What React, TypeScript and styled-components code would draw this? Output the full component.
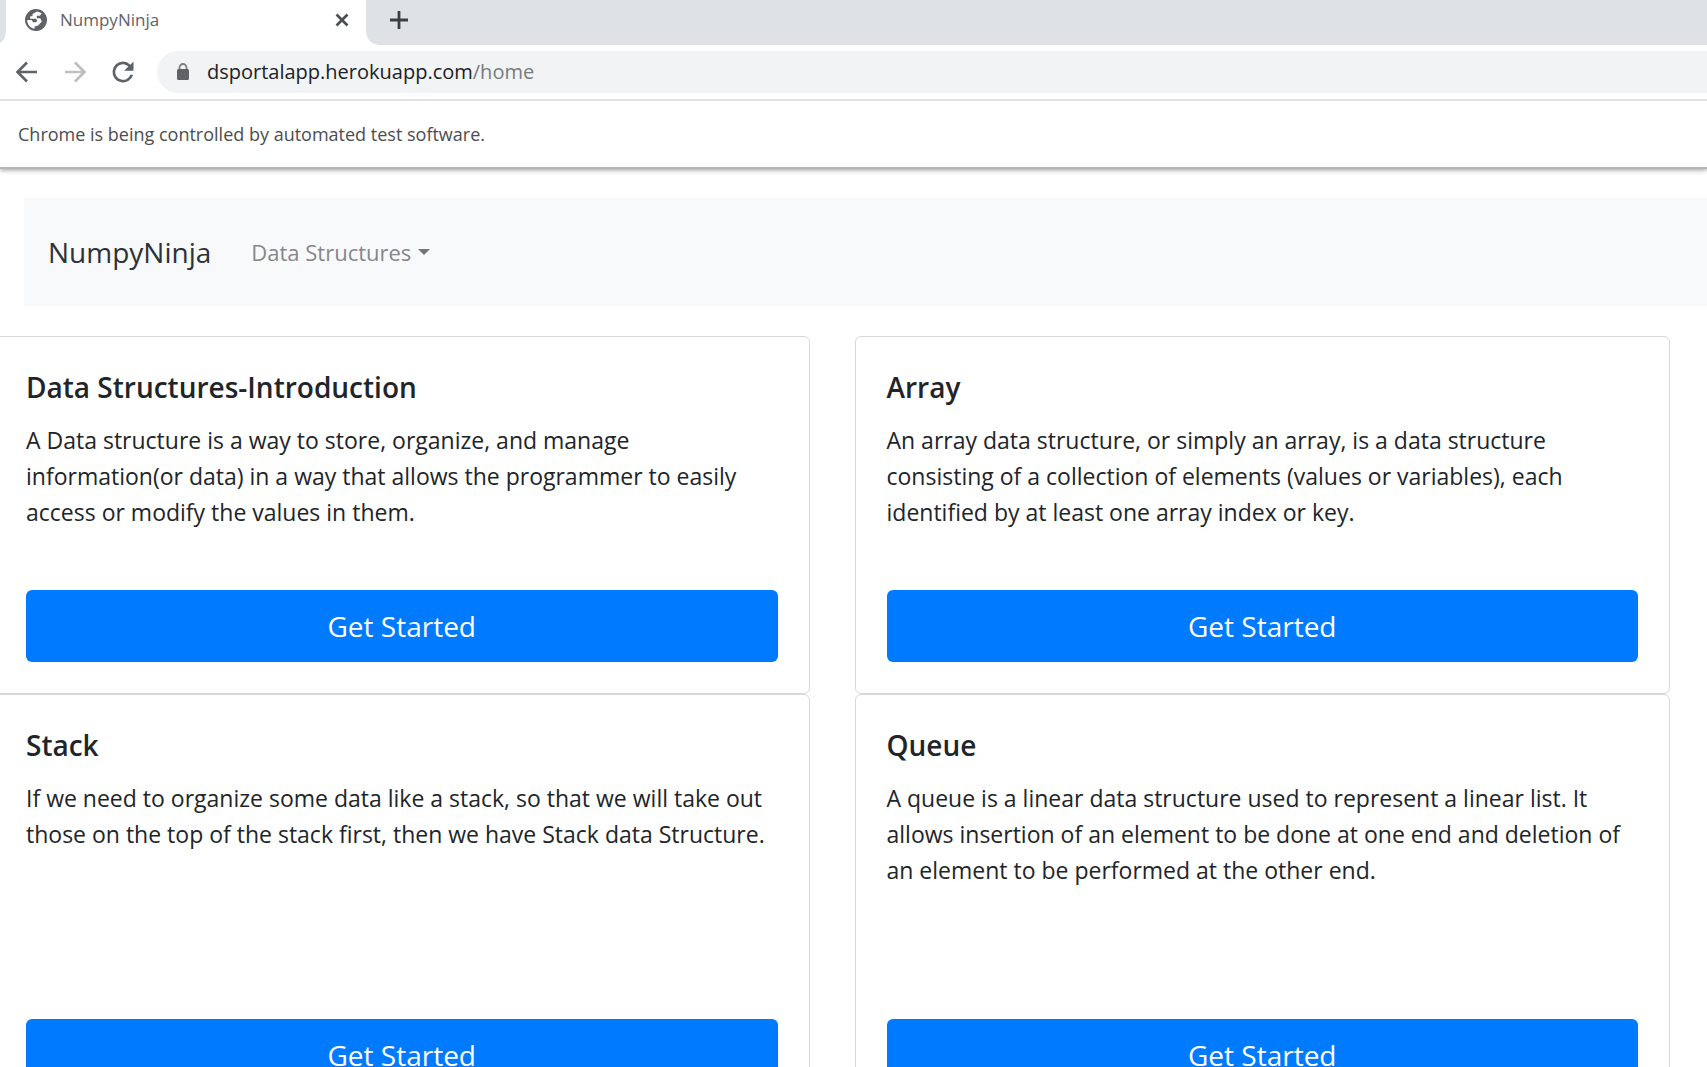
import styled, { createGlobalStyle } from "styled-components";

const GlobalStyle = createGlobalStyle`
  *, *::before, *::after { box-sizing: border-box; }
  body {
    margin: 0;
    background: #fff;
    color: #212529;
    font-family: "Open Sans", "Noto Sans", sans-serif;
  }
  button, input { font-family: inherit; }
`;

const Window = styled.div`
  display: flex;
  flex-direction: column;
  height: 100vh;
  overflow: hidden;
`;

const TabStrip = styled.div`
  display: flex;
  flex: none;
  height: 45px;
  padding-left: 6px;
  background: #dee1e6;
`;

const Tab = styled.div`
  position: relative;
  display: flex;
  align-items: center;
  width: 360px;
  padding: 0 17px 6px 17px;
  background: #fff;

  &::before,
  &::after {
    content: "";
    position: absolute;
    bottom: 0;
    width: 12px;
    height: 12px;
  }
  &::before {
    right: 100%;
    background: radial-gradient(circle at 0 0, transparent 11px, #fff 12px);
  }
  &::after {
    left: 100%;
    background: radial-gradient(circle at 100% 0, transparent 11px, #fff 12px);
  }
`;

const TabTitle = styled.span`
  flex: 1;
  margin-left: 11px;
  color: #5f6368;
  font-size: 17px;
  line-height: 24px;
`;

const IconButton = styled.button<{ $color?: string }>`
  display: flex;
  align-items: center;
  justify-content: center;
  padding: 0;
  border: 0;
  background: none;
  color: ${(p) => p.$color ?? "#5f6368"};
`;

const NewTabButton = styled(IconButton)`
  margin: 0 0 6px 21px;
`;

const Toolbar = styled.div`
  display: flex;
  flex: none;
  align-items: center;
  gap: 20px;
  height: 56px;
  padding-left: 13px;
  border-bottom: 2px solid #e1e3e6;
`;

const AddressBar = styled.div`
  display: flex;
  flex: 1;
  align-items: center;
  height: 42px;
  padding-left: 19px;
  border-radius: 21px 0 0 21px;
  background: #f1f3f4;
`;

const Address = styled.div`
  margin-left: 17px;
  color: #777b80;
  font-size: 20px;
  line-height: 28px;
`;

const Host = styled.span`
  color: #202124;
`;

const InfoBar = styled.div`
  display: flex;
  flex: none;
  align-items: center;
  height: 68px;
  padding-left: 18px;
  border-bottom: 2px solid #b4b6b5;
  color: #4a4d51;
  font-size: 18px;
  line-height: 24px;
  box-shadow: 0 1px 5px rgba(0, 0, 0, 0.4);
  clip-path: inset(0 0 -10px 0);
`;

const Page = styled.main`
  flex: 1;
  min-height: 0;
  padding-top: 29px;
`;

const Navbar = styled.nav`
  display: flex;
  align-items: center;
  gap: 40px;
  height: 108px;
  margin-left: 24px;
  padding: 0 24px;
  background: #f8f9fb;
`;

const Brand = styled.a`
  color: #2f3235;
  font-size: 28px;
  line-height: 36px;
  text-decoration: none;
`;

const NavToggle = styled.button`
  display: flex;
  align-items: center;
  gap: 7px;
  padding: 0;
  border: 0;
  background: none;
  color: #868788;
  font-size: 22px;
  line-height: 36px;
`;

const Caret = styled.span`
  border: 6px solid transparent;
  border-top-color: #757677;
  border-bottom: 0;
`;

const CardGrid = styled.div`
  display: grid;
  grid-template-columns: 1fr 1fr;
  column-gap: 45px;
  margin: 30px 37px 0 -6px;
`;

const Card = styled.section`
  display: flex;
  flex-direction: column;
  padding: 32px 31px 31px;
  border: 1px solid #d8d8d8;
  border-radius: 6px;
`;

const CardTitle = styled.h5`
  margin: 0 0 17px;
  font-size: 28px;
  font-weight: 600;
  line-height: 36px;
`;

const CardText = styled.p<{ $minHeight: number }>`
  min-height: ${(p) => p.$minHeight}px;
  margin: 0;
  font-size: 23px;
  line-height: 36px;
`;

const StartLink = styled.a`
  padding: 18px;
  border-radius: 6px;
  background: #007bff;
  color: #fff;
  font-size: 28px;
  line-height: 36px;
  text-align: center;
  text-decoration: none;
`;

const GlobeIcon = () => (
  <svg width="26" height="24" viewBox="0 0 26 24" aria-hidden="true">
    <circle cx="13" cy="12" r="11" fill="#5f6368" />
    <path
      fill="#fff"
      d="M14 3.4 9.5 6v2.2H7.2v2.6h5.6l1.5 1.7-1.2 1.8h-3L8.6 12H4.2c0 4.6 3.4 8.2 7.4 8.8v-2.2l3.6-1.2 3.6-3.8-1.6-3.4h-3.4V7.8h2.9l2-2.2A9 9 0 0 0 14 3.4Z"
    />
  </svg>
);

const CloseIcon = () => (
  <svg width="14" height="14" viewBox="0 0 14 14" stroke="currentColor" strokeWidth="2.6" aria-hidden="true">
    <path d="m1.5 1.5 11 11m0-11-11 11" />
  </svg>
);

const PlusIcon = () => (
  <svg width="24" height="24" viewBox="0 0 24 24" stroke="currentColor" strokeWidth="2.8" aria-hidden="true">
    <path d="M12 3v18M3 12h18" />
  </svg>
);

const ArrowIcon = ({ forward = false }: { forward?: boolean }) => (
  <svg width="28" height="28" viewBox="0 0 28 28" fill="none" stroke="currentColor" strokeWidth="2.6" aria-hidden="true">
    <path d={forward ? "M4 14h19M14 4.5l9.5 9.5-9.5 9.5" : "M24 14H5M14 4.5 4.5 14l9.5 9.5"} />
  </svg>
);

const ReloadIcon = () => (
  <svg width="28" height="28" viewBox="0 0 24 24" fill="currentColor" aria-hidden="true">
    <path d="M18.3 5.7A8.9 8.9 0 0 0 12 3a9 9 0 1 0 8.7 11.3h-2.4A6.7 6.7 0 1 1 12 5.3c1.8 0 3.4.8 4.6 2L13 11h8V3Z" />
  </svg>
);

const LockIcon = () => (
  <svg width="14" height="20" viewBox="0 0 14 20" aria-hidden="true">
    <path d="M3.5 8V5.5a3.5 3.5 0 0 1 7 0V8" fill="none" stroke="#7b7e82" strokeWidth="1.8" />
    <rect x="1" y="7" width="12" height="11" rx="1.5" fill="#5f6368" />
  </svg>
);

const topics = [
  {
    title: "Data Structures-Introduction",
    text: "A Data structure is a way to store, organize, and manage information(or data) in a way that allows the programmer to easily access or modify the values in them.",
    minHeight: 168,
  },
  {
    title: "Array",
    text: "An array data structure, or simply an array, is a data structure consisting of a collection of elements (values or variables), each identified by at least one array index or key.",
    minHeight: 168,
  },
  {
    title: "Stack",
    text: "If we need to organize some data like a stack, so that we will take out those on the top of the stack first, then we have Stack data Structure.",
    minHeight: 239,
  },
  {
    title: "Queue",
    text: "A queue is a linear data structure used to represent a linear list. It allows insertion of an element to be done at one end and deletion of an element to be performed at the other end.",
    minHeight: 239,
  },
];

export default function App() {
  return (
    <Window>
      <GlobalStyle />
      <TabStrip>
        <Tab>
          <GlobeIcon />
          <TabTitle>NumpyNinja</TabTitle>
          <IconButton $color="#4a4d51" aria-label="Close tab">
            <CloseIcon />
          </IconButton>
        </Tab>
        <NewTabButton $color="#3c4043" aria-label="New tab">
          <PlusIcon />
        </NewTabButton>
      </TabStrip>
      <Toolbar>
        <IconButton aria-label="Back">
          <ArrowIcon />
        </IconButton>
        <IconButton $color="#bcbec0" aria-label="Forward">
          <ArrowIcon forward />
        </IconButton>
        <IconButton aria-label="Reload">
          <ReloadIcon />
        </IconButton>
        <AddressBar>
          <LockIcon />
          <Address>
            <Host>dsportalapp.herokuapp.com</Host>/home
          </Address>
        </AddressBar>
      </Toolbar>
      <InfoBar>Chrome is being controlled by automated test software.</InfoBar>
      <Page>
        <Navbar>
          <Brand href="#home">NumpyNinja</Brand>
          <NavToggle>
            Data Structures
            <Caret />
          </NavToggle>
        </Navbar>
        <CardGrid>
          {topics.map((topic) => (
            <Card key={topic.title}>
              <CardTitle>{topic.title}</CardTitle>
              <CardText $minHeight={topic.minHeight}>{topic.text}</CardText>
              <StartLink href={`#${topic.title.toLowerCase()}`}>Get Started</StartLink>
            </Card>
          ))}
        </CardGrid>
      </Page>
    </Window>
  );
}
